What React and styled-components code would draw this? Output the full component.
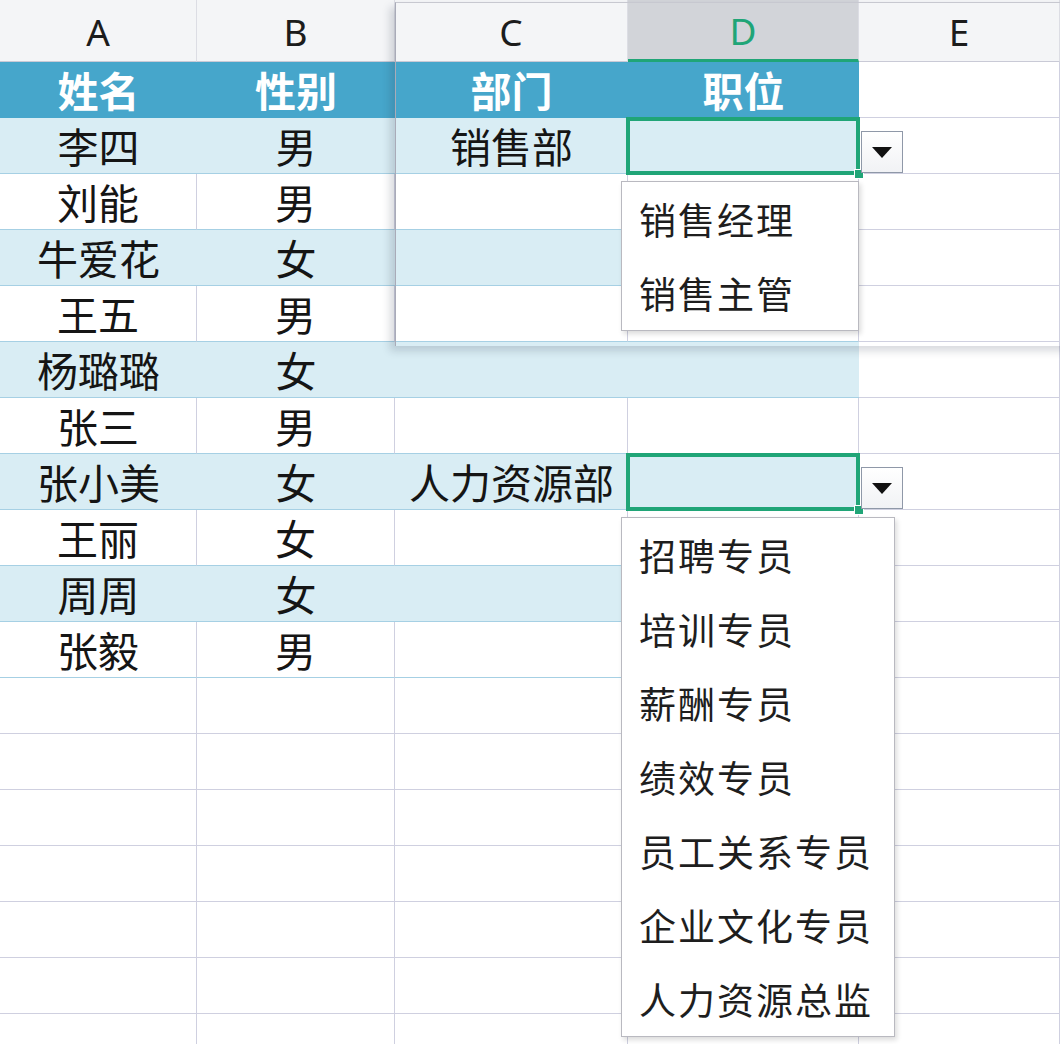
import React from "react";
import styled, { createGlobalStyle, css } from "styled-components";

const GlobalStyle = createGlobalStyle`
  html, body {
    margin: 0;
    padding: 0;
    background: #ffffff;
    overflow: hidden;
  }
  body {
    width: 1060px;
    height: 1044px;
    font-family: "Noto Sans CJK SC", "Noto Sans", sans-serif;
  }
`;

const CJK = `"Noto Sans CJK SC", "Noto Sans", sans-serif`;
const GREEN = "#20a577";
const GRID = "#cfd0e0";
const TABLE_LINE = "#a6d0e4";

const Sheet = styled.div`
  position: relative;
  display: grid;
  grid-template-columns: 197px 198px 233px 231px 1fr;
  grid-template-rows: 62px;
  grid-auto-rows: 56px;
  width: 1060px;
  height: 1044px;
  overflow: hidden;
`;

const ColHead = styled.div`
  display: flex;
  align-items: center;
  justify-content: center;
  font-family: "Noto Sans", "Liberation Sans", sans-serif;
  font-size: 37px;
  color: ${({ $active }) => ($active ? GREEN : "#1c1c1c")};
  background: ${({ $active }) => ($active ? "#d2d4d9" : "#f4f5f7")};
  border-right: 1px solid #dcdde4;
  border-bottom: ${({ $active }) =>
    $active ? `3px solid ${GREEN}` : "1px solid #c9cad6"};
  box-sizing: border-box;
  padding-top: 2px;
`;

const kinds = {
  head: css`
    background: #46a6cb;
    color: #ffffff;
    font-weight: 700;
    border-bottom: 1px solid #46a6cb;
  `,
  band: css`
    background: #d9edf4;
    color: #151515;
    border-bottom: 1px solid ${TABLE_LINE};
  `,
  row: css`
    background: #ffffff;
    color: #151515;
    border-right: 1px solid ${GRID};
    border-bottom: 1px solid ${TABLE_LINE};
  `,
  empty: css`
    background: #ffffff;
    border-right: 1px solid ${GRID};
    border-bottom: 1px solid ${GRID};
  `,
};

const Cell = styled.div`
  position: relative;
  display: flex;
  align-items: center;
  justify-content: center;
  box-sizing: border-box;
  font-family: ${CJK};
  font-size: 41px;
  line-height: 1;
  white-space: nowrap;
  ${({ $kind }) => kinds[$kind]}
`;

const SelectBox = styled.div`
  position: absolute;
  left: -2px;
  top: -1px;
  right: -1px;
  bottom: -2px;
  border: 4px solid ${GREEN};
  z-index: 3;
`;

const FillHandle = styled.div`
  position: absolute;
  right: -5px;
  bottom: -6px;
  width: 8px;
  height: 8px;
  background: ${GREEN};
  border: 1px solid #ffffff;
  z-index: 4;
`;

const DropButton = styled.div`
  position: absolute;
  left: calc(100% + 2px);
  top: 13px;
  width: 42px;
  height: 42px;
  box-sizing: border-box;
  border: 1px solid #8f98a8;
  background: linear-gradient(#ffffff, #f1f2f5);
  display: flex;
  align-items: center;
  justify-content: center;
  z-index: 4;
`;

const DropList = styled.div`
  position: absolute;
  left: -7px;
  top: calc(100% + 8px);
  width: ${({ $width }) => $width}px;
  background: #ffffff;
  border: 1px solid #b9b9c0;
  box-shadow: 2px 3px 5px rgba(0, 0, 0, 0.14);
  z-index: 5;
`;

const DropItem = styled.div`
  height: 74px;
  display: flex;
  align-items: center;
  padding-left: 17px;
  font-family: ${CJK};
  font-size: 37px;
  letter-spacing: 2px;
  color: #1e1e1e;
  white-space: nowrap;
`;

const PanelFrame = styled.div`
  position: absolute;
  left: 395px;
  top: 2px;
  width: 680px;
  height: 343px;
  border-left: 1px solid #a9abb8;
  border-top: 1px solid #c7c8d0;
  box-shadow: -5px 5px 8px rgba(40, 50, 70, 0.18);
  pointer-events: none;
  z-index: 2;
`;

const Caret = () => (
  <svg width="20" height="11" viewBox="0 0 20 11">
    <path d="M0 0 L20 0 L10 11 Z" fill="#111" />
  </svg>
);

const people = [
  { name: "李四", sex: "男", dept: "销售部", options: ["销售经理", "销售主管"], width: 236 },
  { name: "刘能", sex: "男" },
  { name: "牛爱花", sex: "女" },
  { name: "王五", sex: "男" },
  { name: "杨璐璐", sex: "女" },
  { name: "张三", sex: "男" },
  {
    name: "张小美",
    sex: "女",
    dept: "人力资源部",
    options: ["招聘专员", "培训专员", "薪酬专员", "绩效专员", "员工关系专员", "企业文化专员", "人力资源总监"],
    width: 272,
  },
  { name: "王丽", sex: "女" },
  { name: "周周", sex: "女" },
  { name: "张毅", sex: "男" },
];

const SelectedCell = ({ kind, options, width }) => (
  <Cell $kind={kind}>
    <SelectBox />
    <FillHandle />
    <DropButton>
      <Caret />
    </DropButton>
    <DropList $width={width}>
      {options.map((o) => (
        <DropItem key={o}>{o}</DropItem>
      ))}
    </DropList>
  </Cell>
);

const App = () => {
  const emptyRows = 8;
  return (
    <>
      <GlobalStyle />
      <Sheet>
        {["A", "B", "C", "D", "E"].map((c) => (
          <ColHead key={c} $active={c === "D"}>
            {c}
          </ColHead>
        ))}

        <Cell $kind="head">姓名</Cell>
        <Cell $kind="head">性别</Cell>
        <Cell $kind="head">部门</Cell>
        <Cell $kind="head">职位</Cell>
        <Cell $kind="empty" />

        {people.map((p, i) => {
          const kind = i % 2 === 0 ? "band" : "row";
          return (
            <React.Fragment key={p.name}>
              <Cell $kind={kind}>{p.name}</Cell>
              <Cell $kind={kind}>{p.sex}</Cell>
              <Cell $kind={kind}>{p.dept}</Cell>
              {p.options ? (
                <SelectedCell kind={kind} options={p.options} width={p.width} />
              ) : (
                <Cell $kind={kind} />
              )}
              <Cell $kind="empty" />
            </React.Fragment>
          );
        })}

        {Array.from({ length: emptyRows * 5 }).map((_, i) => (
          <Cell key={"e" + i} $kind="empty" />
        ))}

        <PanelFrame />
      </Sheet>
    </>
  );
};

export default App;
